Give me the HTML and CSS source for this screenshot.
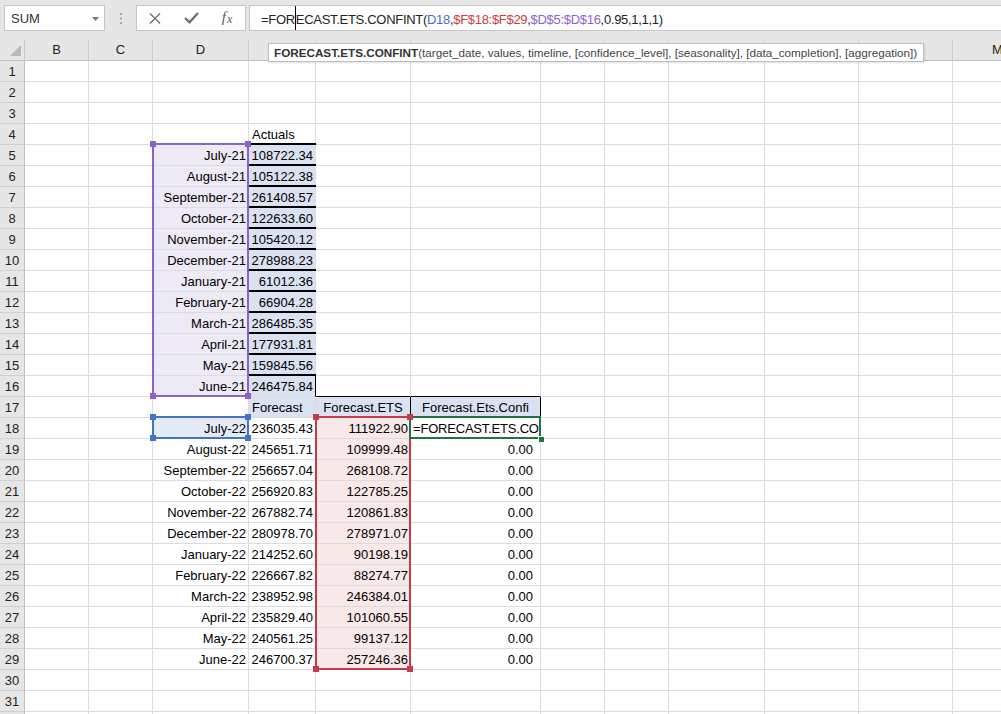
FILE: index.html
```html
<!DOCTYPE html>
<html>
<head>
<meta charset="utf-8">
<title>Excel - FORECAST.ETS.CONFINT</title>
<link rel="stylesheet" href="styles.css">
</head>
<body>
<div class="topbar">
  <div class="namebox"><span>SUM</span><svg class="dd" width="7" height="4" viewBox="0 0 7 4"><polygon points="0,0 7,0 3.5,4" fill="#7a7a7a"/></svg></div>
  <svg class="dots" width="2" height="11" viewBox="0 0 2 11"><rect x="0" y="0" width="2" height="2" fill="#a8a8a8"/><rect x="0" y="4.5" width="2" height="2" fill="#a8a8a8"/><rect x="0" y="9" width="2" height="2" fill="#a8a8a8"/></svg>
  <div class="fxbox">
    <span class="slot"><svg width="12" height="11" viewBox="0 0 12 11"><path d="M1 0.5 L11 10.5 M11 0.5 L1 10.5" stroke="#6e6e6e" stroke-width="1.4" fill="none"/></svg></span>
    <span class="slot"><svg width="15" height="12" viewBox="0 0 15 12"><polyline points="1,6 5.5,10.3 14,1" stroke="#6e6e6e" stroke-width="2.3" fill="none"/></svg></span>
    <span class="slot fx"><i>f</i><i class="fxx">x</i></span>
  </div>
  <div class="fbox"><span class="ftext">=FOR<span class="caret"></span>ECAST.ETS.CONFINT(<span class="rb">D18</span>,<span class="rr">$F$18:$F$29</span>,<span class="rp">$D$5:$D$16</span>,0.95,1,1,1)</span></div>
</div>

<div class="sheet">
  <div class="corner"><svg width="24" height="20" viewBox="0 0 24 20"><polygon points="21,5 21,16 10,16" fill="#b9b9b9"/></svg></div>
  <div class="ch">B</div><div class="ch">C</div><div class="ch">D</div><div class="ch"></div><div class="ch"></div><div class="ch"></div><div class="ch"></div><div class="ch"></div><div class="ch"></div><div class="ch"></div><div class="ch"></div><div class="ch">M</div>

  <div class="rh">1</div><div></div><div></div><div></div><div></div><div></div><div></div><div></div><div></div><div></div><div></div><div></div><div></div>
  <div class="rh">2</div><div></div><div></div><div></div><div></div><div></div><div></div><div></div><div></div><div></div><div></div><div></div><div></div>
  <div class="rh">3</div><div></div><div></div><div></div><div></div><div></div><div></div><div></div><div></div><div></div><div></div><div></div><div></div>
  <div class="rh">4</div><div></div><div></div><div></div><div class="l">Actuals</div><div></div><div></div><div></div><div></div><div></div><div></div><div></div><div></div>
  <div class="rh">5</div><div></div><div></div><div class="r pu">July-21</div><div class="r bl bt">108722.34</div><div></div><div></div><div></div><div></div><div></div><div></div><div></div><div></div>
  <div class="rh">6</div><div></div><div></div><div class="r pu">August-21</div><div class="r bl bt">105122.38</div><div></div><div></div><div></div><div></div><div></div><div></div><div></div><div></div>
  <div class="rh">7</div><div></div><div></div><div class="r pu">September-21</div><div class="r bl bt">261408.57</div><div></div><div></div><div></div><div></div><div></div><div></div><div></div><div></div>
  <div class="rh">8</div><div></div><div></div><div class="r pu">October-21</div><div class="r bl bt">122633.60</div><div></div><div></div><div></div><div></div><div></div><div></div><div></div><div></div>
  <div class="rh">9</div><div></div><div></div><div class="r pu">November-21</div><div class="r bl bt">105420.12</div><div></div><div></div><div></div><div></div><div></div><div></div><div></div><div></div>
  <div class="rh">10</div><div></div><div></div><div class="r pu">December-21</div><div class="r bl bt">278988.23</div><div></div><div></div><div></div><div></div><div></div><div></div><div></div><div></div>
  <div class="rh">11</div><div></div><div></div><div class="r pu">January-21</div><div class="r bl bt">61012.36</div><div></div><div></div><div></div><div></div><div></div><div></div><div></div><div></div>
  <div class="rh">12</div><div></div><div></div><div class="r pu">February-21</div><div class="r bl bt">66904.28</div><div></div><div></div><div></div><div></div><div></div><div></div><div></div><div></div>
  <div class="rh">13</div><div></div><div></div><div class="r pu">March-21</div><div class="r bl bt">286485.35</div><div></div><div></div><div></div><div></div><div></div><div></div><div></div><div></div>
  <div class="rh">14</div><div></div><div></div><div class="r pu">April-21</div><div class="r bl bt">177931.81</div><div></div><div></div><div></div><div></div><div></div><div></div><div></div><div></div>
  <div class="rh">15</div><div></div><div></div><div class="r pu">May-21</div><div class="r bl bt">159845.56</div><div></div><div></div><div></div><div></div><div></div><div></div><div></div><div></div>
  <div class="rh">16</div><div></div><div></div><div class="r pu">June-21</div><div class="r bl bt er">246475.84</div><div class="eb"></div><div class="eb"></div><div></div><div></div><div></div><div></div><div></div><div></div>
  <div class="rh">17</div><div></div><div></div><div></div><div class="l bl">Forecast</div><div class="c bl er">Forecast.ETS</div><div class="c bl er">Forecast.Ets.Confi</div><div></div><div></div><div></div><div></div><div></div><div></div>
  <div class="rh">18</div><div></div><div></div><div class="r db">July-22</div><div class="r">236035.43</div><div class="r rd">111922.90</div><div class="edit">=FORECAST.ETS.CON</div><div></div><div></div><div></div><div></div><div></div><div></div>
  <div class="rh">19</div><div></div><div></div><div class="r">August-22</div><div class="r">245651.71</div><div class="r rd">109999.48</div><div class="r z">0.00</div><div></div><div></div><div></div><div></div><div></div><div></div>
  <div class="rh">20</div><div></div><div></div><div class="r">September-22</div><div class="r">256657.04</div><div class="r rd">268108.72</div><div class="r z">0.00</div><div></div><div></div><div></div><div></div><div></div><div></div>
  <div class="rh">21</div><div></div><div></div><div class="r">October-22</div><div class="r">256920.83</div><div class="r rd">122785.25</div><div class="r z">0.00</div><div></div><div></div><div></div><div></div><div></div><div></div>
  <div class="rh">22</div><div></div><div></div><div class="r">November-22</div><div class="r">267882.74</div><div class="r rd">120861.83</div><div class="r z">0.00</div><div></div><div></div><div></div><div></div><div></div><div></div>
  <div class="rh">23</div><div></div><div></div><div class="r">December-22</div><div class="r">280978.70</div><div class="r rd">278971.07</div><div class="r z">0.00</div><div></div><div></div><div></div><div></div><div></div><div></div>
  <div class="rh">24</div><div></div><div></div><div class="r">January-22</div><div class="r">214252.60</div><div class="r rd">90198.19</div><div class="r z">0.00</div><div></div><div></div><div></div><div></div><div></div><div></div>
  <div class="rh">25</div><div></div><div></div><div class="r">February-22</div><div class="r">226667.82</div><div class="r rd">88274.77</div><div class="r z">0.00</div><div></div><div></div><div></div><div></div><div></div><div></div>
  <div class="rh">26</div><div></div><div></div><div class="r">March-22</div><div class="r">238952.98</div><div class="r rd">246384.01</div><div class="r z">0.00</div><div></div><div></div><div></div><div></div><div></div><div></div>
  <div class="rh">27</div><div></div><div></div><div class="r">April-22</div><div class="r">235829.40</div><div class="r rd">101060.55</div><div class="r z">0.00</div><div></div><div></div><div></div><div></div><div></div><div></div>
  <div class="rh">28</div><div></div><div></div><div class="r">May-22</div><div class="r">240561.25</div><div class="r rd">99137.12</div><div class="r z">0.00</div><div></div><div></div><div></div><div></div><div></div><div></div>
  <div class="rh">29</div><div></div><div></div><div class="r">June-22</div><div class="r">246700.37</div><div class="r rd">257246.36</div><div class="r z">0.00</div><div></div><div></div><div></div><div></div><div></div><div></div>
  <div class="rh">30</div><div></div><div></div><div></div><div></div><div></div><div></div><div></div><div></div><div></div><div></div><div></div><div></div>
  <div class="rh">31</div><div></div><div></div><div></div><div></div><div></div><div></div><div></div><div></div><div></div><div></div><div></div><div></div>
  <div class="rh"></div><div></div><div></div><div></div><div></div><div></div><div></div><div></div><div></div><div></div><div></div><div></div><div></div>

  <span class="rng pur"><span class="hd tl"></span><span class="hd tr"></span><span class="hd bl2"></span><span class="hd br2"></span></span>
  <span class="rng blu"><span class="hd tl"></span><span class="hd tr"></span><span class="hd bl2"></span><span class="hd br2"></span></span>
  <span class="rng red"><span class="hd tl"></span><span class="hd tr"></span><span class="hd bl2"></span><span class="hd br2"></span></span>
  <span class="rng act"><span class="fill"></span></span>

  <span class="tip"><b>FORECAST.ETS.CONFINT</b>(target_date, values, timeline, [confidence_level], [seasonality], [data_completion], [aggregation])</span>
</div>
</body>
</html>
```
FILE: styles.css
```css
* { box-sizing: border-box; }
html, body { margin: 0; padding: 0; }
body {
  width: 1001px;
  height: 714px;
  overflow: hidden;
  background: #ffffff;
  font-family: "Liberation Sans", Arial, sans-serif;
  color: #000;
}

/* ---------- formula bar ---------- */
.topbar {
  height: 40px;
  background: #e6e6e6;
  display: flex;
  align-items: flex-start;
  padding: 5px 0 0 4px;
  white-space: nowrap;
  overflow: hidden;
}
.namebox {
  flex: none;
  width: 101px;
  height: 26px;
  background: #fff;
  border: 1px solid #c6c6c6;
  display: flex;
  align-items: center;
  padding-left: 6px;
  font-size: 13px;
  color: #333;
}
.namebox .dd { margin-left: auto; margin-right: 5px; margin-top: 1px; }
.dots { margin: 8px 0 0 15px; flex: none; }
.fxbox {
  margin-left: 14px;
  width: 110px;
  height: 26px;
  background: #fff;
  border: 1px solid #c6c6c6;
  display: flex;
  flex: none;
}
.slot {
  width: 36px;
  height: 24px;
  display: flex;
  align-items: center;
  justify-content: center;
}
.fx {
  font-family: "Liberation Serif", "Times New Roman", serif;
  font-size: 15px;
  color: #5a5a5a;
  padding-bottom: 2px;
}
.fx i { font-style: italic; }
.fx .fxx { font-size: 12px; margin-left: 1px; position: relative; top: 2px; }
.fbox {
  margin-left: 3px;
  width: 770px;
  height: 26px;
  background: #fff;
  border: 1px solid #c6c6c6;
  flex: none;
  padding-left: 11px;
  font-size: 13px;
  letter-spacing: -0.3px;
  line-height: 24px;
  color: #222;
}
.caret {
  display: inline-block;
  width: 1px;
  height: 24px;
  background: #000;
  vertical-align: -6px;
}
.rb { color: #3f6fc4; }
.rr { color: #d03b3e; }
.rp { color: #8e62cc; }

/* ---------- sheet ---------- */
.sheet {
  position: relative;
  display: grid;
  grid-template-columns: 25px 64px 64px 96px 67px 95px 130px 64px 64px 96px 94px 94px 90px;
  grid-auto-rows: 21px;
  width: max-content;
}
.sheet > div {
  border-right: 1px solid #dadcdd;
  border-bottom: 1px solid #dadcdd;
  font-size: 13px;
  line-height: 21px;
  padding: 0 3px;
  white-space: nowrap;
}
.sheet > .corner {
  background: #e6e6e6;
  border-right: 1px solid #c8c8c8;
  border-bottom: 1px solid #c0c0c0;
  padding: 0;
}
.corner svg { display: block; }
.sheet > .ch {
  background: #e6e6e6;
  border-right: 1px solid #cdcdcd;
  border-bottom: 1px solid #c0c0c0;
  text-align: center;
  color: #222;
  line-height: 20px;
}
.sheet > .rh {
  background: #e6e6e6;
  border-right: 1px solid #c0c0c0;
  border-bottom: 1px solid #d0d0d0;
  text-align: center;
  color: #222;
  padding: 0;
}
.sheet > .l { text-align: left; }
.sheet > .r { text-align: right; padding-right: 2px; padding-left: 0; }
.sheet > .c { text-align: center; padding: 0; }
.sheet > .z { padding-right: 7px; }
.sheet > .pu { background: #eeeaf5; }
.sheet > .bl { background: #dae2f2; }
.sheet > .db { background: #e3eaf6; }
.sheet > .rd { background: #f9e8e8; }
.sheet > .bt { box-shadow: 0 -2px 0 #000; }
.sheet > .er { border-right-color: #000; }
.sheet > .eb { border-bottom-color: #000; }
.sheet > .edit { overflow: hidden; padding-left: 2px; color: #000; letter-spacing: -0.2px; }

/* range finder overlays */
.rng {
  position: absolute;
  display: block;
  border: 2px solid currentColor;
  pointer-events: none;
}
.pur { left: 152px; top: 103px; width: 97px; height: 254px; color: #8b62c9; }
.blu { left: 152px; top: 376px; width: 97px; height: 23px; color: #4473c5; }
.red { left: 315px; top: 376px; width: 96px; height: 254px; color: #c43c4a; }
.act { left: 409px; top: 376px; width: 132px; height: 23px; color: #217346; }
.hd {
  position: absolute;
  display: block;
  width: 6px;
  height: 6px;
  background: currentColor;
  z-index: 2;
}
.hd.tl { left: -4px; top: -4px; }
.hd.tr { right: -4px; top: -4px; }
.hd.bl2 { left: -4px; bottom: -4px; }
.hd.br2 { right: -4px; bottom: -4px; }
.fill {
  position: absolute;
  display: block;
  right: -5px;
  bottom: -5px;
  width: 6px;
  height: 6px;
  background: #217346;
  border: 1px solid #fff;
  border-right: 0;
  border-bottom: 0;
}

/* tooltip */
.tip {
  position: absolute;
  left: 268px;
  top: 3px;
  height: 19px;
  display: block;
  background: #fff;
  border: 1px solid #bdbdbd;
  box-shadow: 1px 1px 2px rgba(0, 0, 0, 0.12);
  padding: 0 6px 0 5px;
  font-size: 11.7px;
  line-height: 17px;
  color: #444;
  white-space: nowrap;
  z-index: 5;
}
.tip b { color: #333; }
```
